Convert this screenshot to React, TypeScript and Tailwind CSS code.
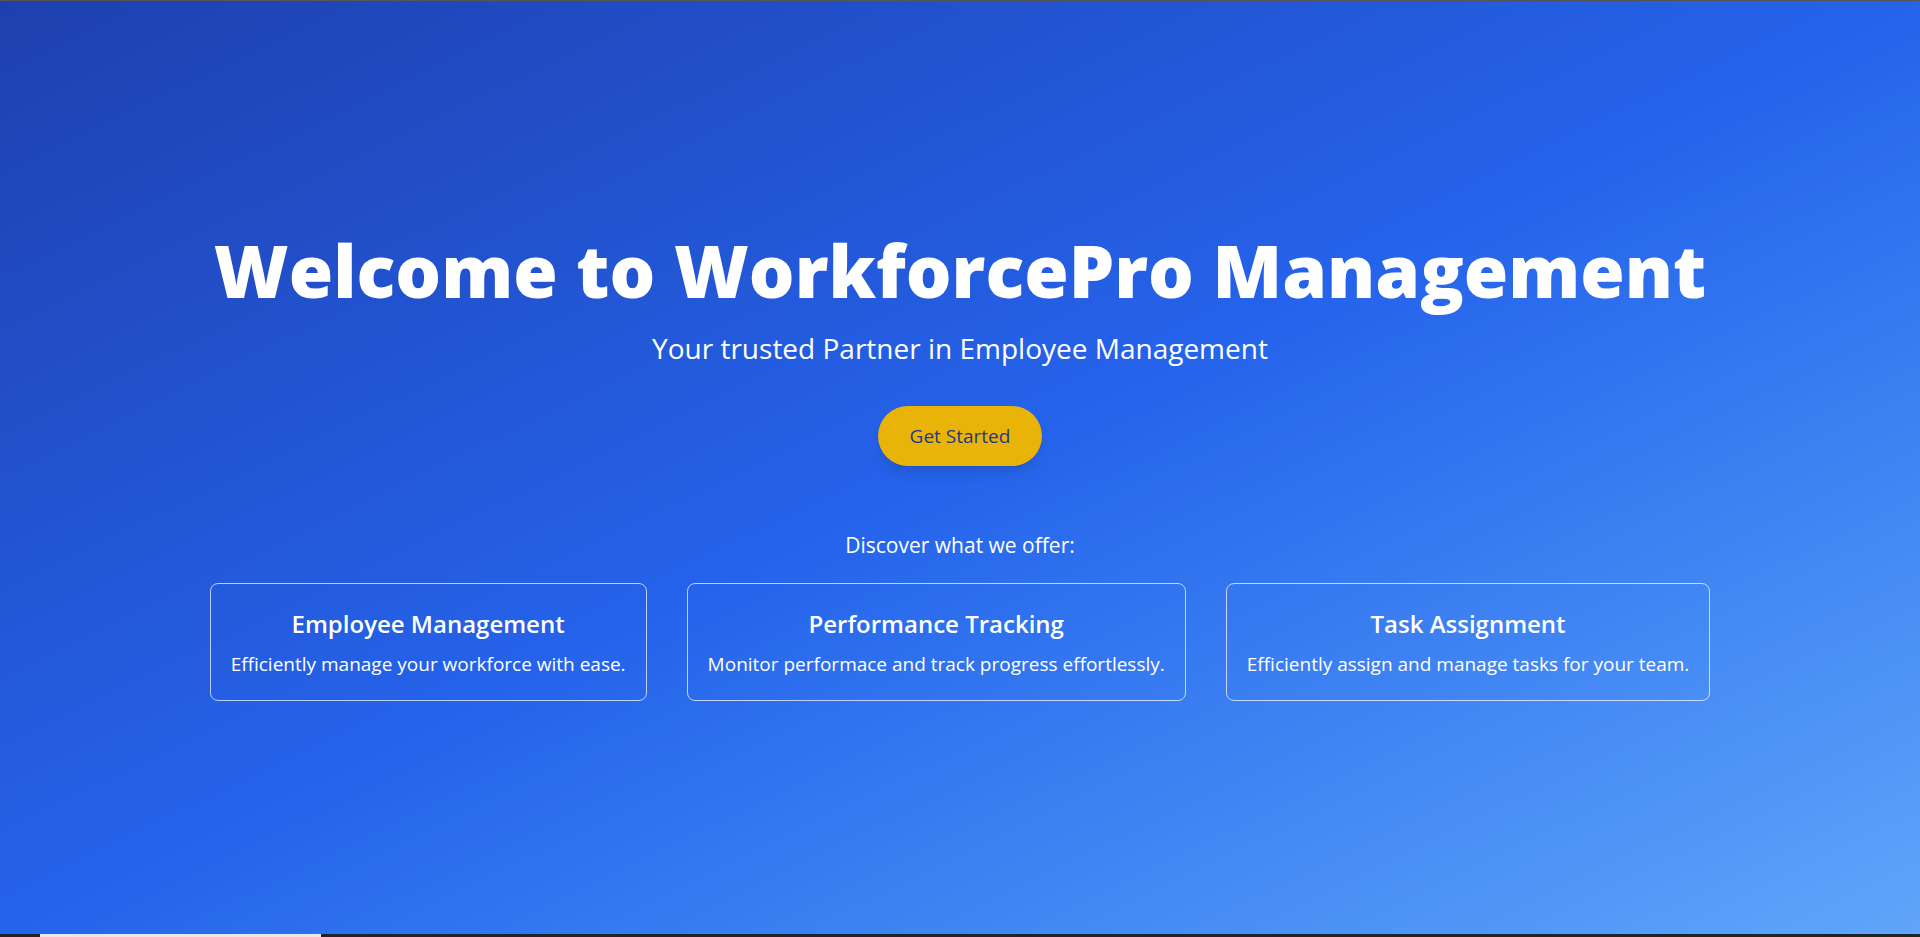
import React from "react";

interface FeatureProps {
    title: string,
    text: string
}

const Feature: React.FC<FeatureProps> = ({ title, text }) => {
    return (
        <div className="rounded-lg border border-white/70 px-5 pt-6 pb-[22px] text-center">
            <h3 className="text-2xl font-semibold mb-2.5">{title}</h3>
            <p className="text-[19px] leading-7">{text}</p>
        </div>
    );
}

const features: FeatureProps[] = [
    { title: "Employee Management", text: "Efficiently manage your workforce with ease." },
    { title: "Performance Tracking", text: "Monitor performace and track progress effortlessly." },
    { title: "Task Assignment", text: "Efficiently assign and manage tasks for your team." },
];

export default function App() {
    return (
        <div className="h-screen flex flex-col overflow-hidden" style={{ fontFamily: '"Open Sans", "Noto Sans", sans-serif' }}>
            <div className="h-px bg-[#555]" />
            <main className="flex-1 flex flex-col items-center justify-center bg-gradient-to-br from-[#1e40af] via-[#2563eb] to-[#60a5fa] text-white">
                <h1 className="text-7xl font-extrabold leading-none">Welcome to WorkforcePro Management</h1>
                <p className="text-[28px] leading-9 mt-6">Your trusted Partner in Employee Management</p>
                <button className="mt-10 rounded-full bg-[#eab308] px-8 py-4 text-[19px] leading-7 font-medium text-[#1e3a8a] shadow-lg">
                    Get Started
                </button>
                <p className="text-[21px] mt-16">Discover what we offer:</p>
                <div className="mt-[22px] flex gap-10">
                    {features.map((f) => (
                        <Feature key={f.title} title={f.title} text={f.text} />
                    ))}
                </div>
            </main>
            <div className="h-[3px] bg-[#202327] flex">
                <div className="ml-10 w-[281px] bg-[#e8e8e8]" />
            </div>
        </div>
    );
}
